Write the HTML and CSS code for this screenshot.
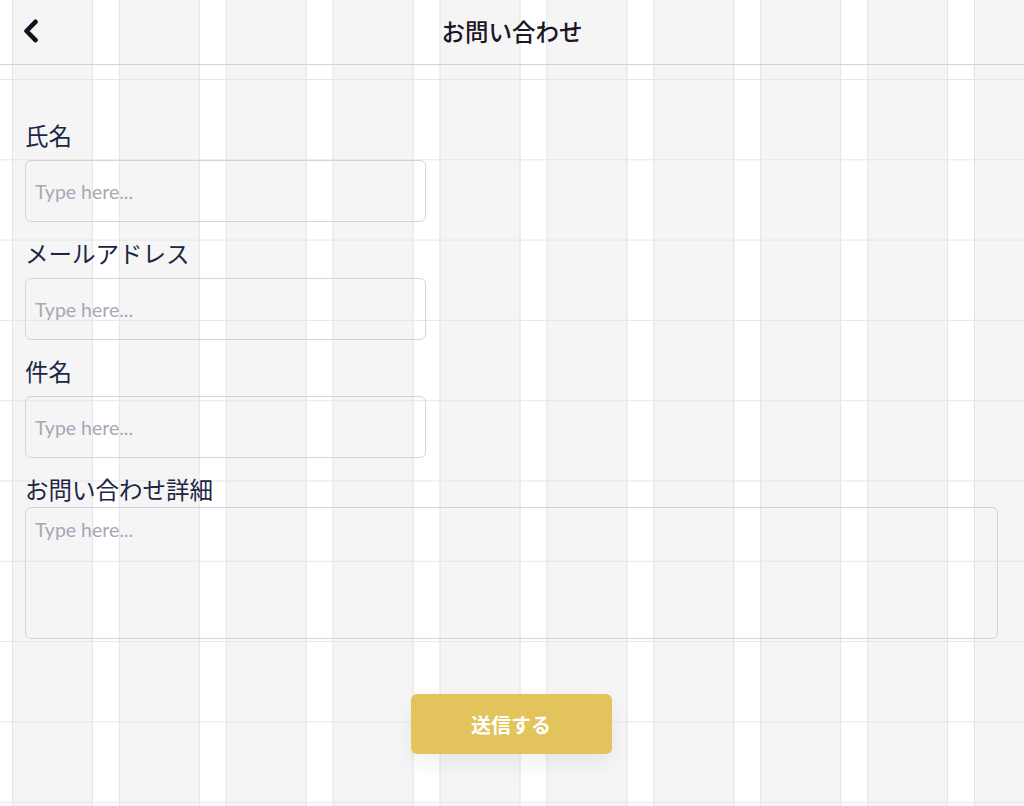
FILE: index.html
```html
<!DOCTYPE html>
<html lang="ja">
<head>
<meta charset="utf-8">
<title>お問い合わせ</title>
<link rel="stylesheet" href="styles.css">
</head>
<body>
<header class="topbar">
  <button class="back" type="button" aria-label="戻る">
    <svg width="18" height="24" viewBox="0 0 18 24"><path d="M13.5 2.8 L4.5 12 L13.5 21.2" fill="none" stroke="#150f1f" stroke-width="4.6" stroke-linecap="round" stroke-linejoin="round"/></svg>
  </button>
  <h1 class="title">お問い合わせ</h1>
  <span class="spacer"></span>
</header>
<main class="form">
  <label class="field">
    <span class="label">氏名</span>
    <input class="input" type="text" placeholder="Type here...">
  </label>
  <label class="field">
    <span class="label">メールアドレス</span>
    <input class="input" type="email" placeholder="Type here...">
  </label>
  <label class="field">
    <span class="label">件名</span>
    <input class="input" type="text" placeholder="Type here...">
  </label>
  <label class="field field-wide">
    <span class="label label-tight">お問い合わせ詳細</span>
    <textarea class="input textarea" placeholder="Type here..."></textarea>
  </label>
  <div class="actions">
    <button class="submit" type="button">送信する</button>
  </div>
</main>
</body>
</html>
```

FILE: styles.css
```css
html, body {
  margin: 0;
  padding: 0;
}
body {
  min-height: 806px;
  font-family: "Lato", "Noto Sans CJK JP", sans-serif;
  background-color: #ffffff;
  background-image:
    linear-gradient(to bottom, #e6e6e6 0 1px, transparent 1px),
    linear-gradient(to right, #e4e4e4 0 1px, transparent 1px 80px, #e4e4e4 80px 81px, transparent 81px),
    linear-gradient(to right, #f5f5f5 0 81px, #ffffff 81px);
  background-size: 100% 80.3px, 106.9px 100%, 106.9px 100%;
  background-position: 0 79px, 12px 0, 12px 0;
}
.topbar {
  height: 64px;
  border-bottom: 1px solid #d3d3d3;
  display: grid;
  grid-template-columns: 60px 1fr 60px;
  align-items: center;
  box-sizing: content-box;
}
.back {
  background: none;
  border: 0;
  padding: 0 0 0 22px;
  margin-top: -3px;
  display: flex;
  align-items: center;
  cursor: pointer;
}
.title {
  margin: 0;
  text-align: center;
  font-family: "Noto Sans CJK JP", sans-serif;
  font-size: 23.5px;
  font-weight: 500;
  color: #1b1727;
  margin-top: -2px;
}
.form {
  padding: 55px 25px 0 25px;
  display: flex;
  flex-direction: column;
}
.field {
  display: flex;
  flex-direction: column;
  align-items: flex-start;
  margin-bottom: 16px;
}
.field-wide {
  align-items: stretch;
  margin-bottom: 0;
}
.label {
  font-family: "Noto Sans CJK JP", sans-serif;
  font-size: 23.5px;
  line-height: 30px;
  color: #1c2645;
  margin-bottom: 10px;
}
.label-tight {
  margin-bottom: 3px;
}
.input {
  box-sizing: border-box;
  width: 401px;
  height: 62px;
  border: 1px solid #d3d5dc;
  border-radius: 6px;
  background: transparent;
  padding: 0 9px;
  font-family: "Lato", "Noto Sans CJK JP", sans-serif;
  font-size: 19.5px;
  color: #1c2645;
  outline: none;
}
.input::placeholder {
  color: #a5a9b5;
}
.textarea {
  width: 973px;
  height: 132px;
  padding: 10px 9px;
  resize: none;
  line-height: 24px;
}
.actions {
  display: flex;
  justify-content: center;
  padding-top: 55px;
  padding-right: 2px;
}
.submit {
  width: 201px;
  height: 60px;
  border: 0;
  border-radius: 6px;
  background: #e3c35b;
  color: #ffffff;
  font-family: "Noto Sans CJK JP", sans-serif;
  font-size: 20px;
  font-weight: 700;
  box-shadow: 0 10px 22px rgba(0, 0, 0, 0.06);
  cursor: pointer;
}
```
